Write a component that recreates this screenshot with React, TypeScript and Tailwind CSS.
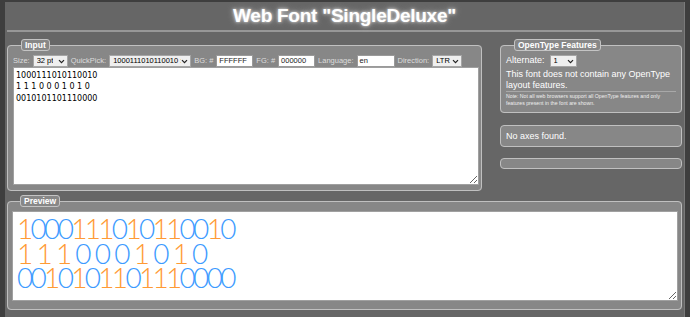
import type { ReactNode } from "react";

const SAMPLE = ["1000111010110010", "1 1 1 0 0 0 1 0 1 0", "0010101101110000"];

const ui = "font-['Liberation_Sans',Arial,sans-serif]";

function Chevron() {
  return (
    <svg width="7" height="5" viewBox="0 0 7 5" className="shrink-0">
      <path d="M1 1.2 L3.5 3.7 L6 1.2" fill="none" stroke="#222" strokeWidth="1.2" />
    </svg>
  );
}

function FakeSelect({ className, children }: { className: string; children: ReactNode }) {
  return (
    <div
      className={`flex h-[12px] shrink-0 items-center justify-between overflow-hidden border border-[#a5a5a5] bg-[#efefef] pr-[2px] pl-[3px] text-[7.5px] text-black ${className}`}
    >
      <span className="overflow-hidden whitespace-nowrap">{children}</span>
      <Chevron />
    </div>
  );
}

function FakeInput({ className, value }: { className: string; value: string }) {
  return (
    <div
      className={`flex h-[12px] shrink-0 items-center border border-[#9a9a9a] bg-white px-[2px] text-[7.5px] text-[#222] ${className}`}
    >
      {value}
    </div>
  );
}

function Legend({ children }: { children: ReactNode }) {
  return (
    <legend className="ml-[8px] flex h-[12px] items-center rounded-[3px] border border-[#c4c4c4] bg-[#878787] px-[3px] text-[8.5px] font-bold text-white">
      {children}
    </legend>
  );
}

function PreviewLine({ text }: { text: string }) {
  return (
    <div className="whitespace-pre">
      {text.split("").map((ch, i) =>
        ch === "1" ? (
          <span key={i} className="text-[#ff9a35]">
            1
          </span>
        ) : ch === "0" ? (
          <span key={i} className="text-[#3d9bff]">
            0
          </span>
        ) : (
          <span key={i}> </span>
        )
      )}
    </div>
  );
}

export default function App() {
  return (
    <div className={`min-h-[317px] bg-[#3e3e3e] px-[5px] pt-[2px] ${ui}`}>
      <div className="min-h-[315px] border-r border-[#7a7a7a] bg-[#666666] pr-[2px] pl-[2px]">
        <header className="flex h-[30px] items-center justify-center border-b-2 border-[#979797]">
          <h1 className="text-[19px] font-bold tracking-[-0.25px] text-white [text-shadow:0_0_3px_#e0e0e0,0_0_6px_#bbbbbb]">
            Web Font "SingleDeluxe"
          </h1>
        </header>

        <div className="mt-[7px] flex items-start gap-[18px]">
          <fieldset className="w-[474px] rounded-[4px] border border-[#c0c0c0] bg-[#878787] pt-[4px] pr-[2px] pb-[5px] pl-[5px]">
            <Legend>Input</Legend>
            <div className="flex items-center gap-[3px] text-[7.5px] text-[#dddddd]">
              <span>Size:</span>
              <FakeSelect className="w-[35px]">32 pt</FakeSelect>
              <span>QuickPick:</span>
              <FakeSelect className="w-[82px]">1000111010110010 :</FakeSelect>
              <span>BG: #</span>
              <FakeInput className="w-[37px]" value="FFFFFF" />
              <span>FG: #</span>
              <FakeInput className="w-[37px]" value="000000" />
              <span>Language:</span>
              <FakeInput className="w-[38px]" value="en" />
              <span>Direction:</span>
              <FakeSelect className="w-[30px]">LTR</FakeSelect>
            </div>
            <textarea
              readOnly
              defaultValue={SAMPLE.join("\n")}
              className="block h-[118px] w-[466px] border border-[#a0a0a0] bg-white px-[2px] pt-[2px] font-['DejaVu_Sans',sans-serif] text-[8px] leading-[11.3px] text-black outline-none"
            />
          </fieldset>

          <div className="w-[183px]">
            <fieldset className="rounded-[4px] border border-[#c0c0c0] bg-[#878787] px-[5px] pt-[4px] pb-[6px] text-white">
              <Legend>OpenType Features</Legend>
              <div className="flex h-[12px] items-center gap-[5px] text-[9px]">
                <span>Alternate:</span>
                <FakeSelect className="w-[27px]">1</FakeSelect>
              </div>
              <p className="mt-[2px] text-[9px] leading-[10.5px]">
                This font does not contain any OpenType layout features.
              </p>
              <div className="mt-[1px] border-t border-[#a8a8a8] pt-[1px] text-[5.2px] leading-[6.7px] text-[#eeeeee]">
                Note: Not all web browsers support all OpenType features and only features present in the font are shown.
              </div>
            </fieldset>

            <div className="mt-[12px] flex h-[22px] items-center rounded-[4px] border border-[#c0c0c0] bg-[#878787] px-[5px] text-[9px] text-white">
              No axes found.
            </div>

            <div className="mt-[11px] h-[11px] rounded-[4px] border border-[#c0c0c0] bg-[#878787]" />
          </div>
        </div>

        <fieldset className="mt-[4px] w-[675px] rounded-[4px] border border-[#c0c0c0] bg-[#878787] pt-[4px] pr-[3px] pb-[8px] pl-[4px]">
          <Legend>Preview</Legend>
          <div className="h-[90px] resize overflow-auto border border-[#a0a0a0] bg-white pt-[4px] pl-[4px] font-['Lato',sans-serif] text-[28px] leading-[24.5px] font-light tracking-[-2.7px] [word-spacing:1px]">
            {SAMPLE.map((line) => (
              <PreviewLine key={line} text={line} />
            ))}
          </div>
        </fieldset>
      </div>
    </div>
  );
}
